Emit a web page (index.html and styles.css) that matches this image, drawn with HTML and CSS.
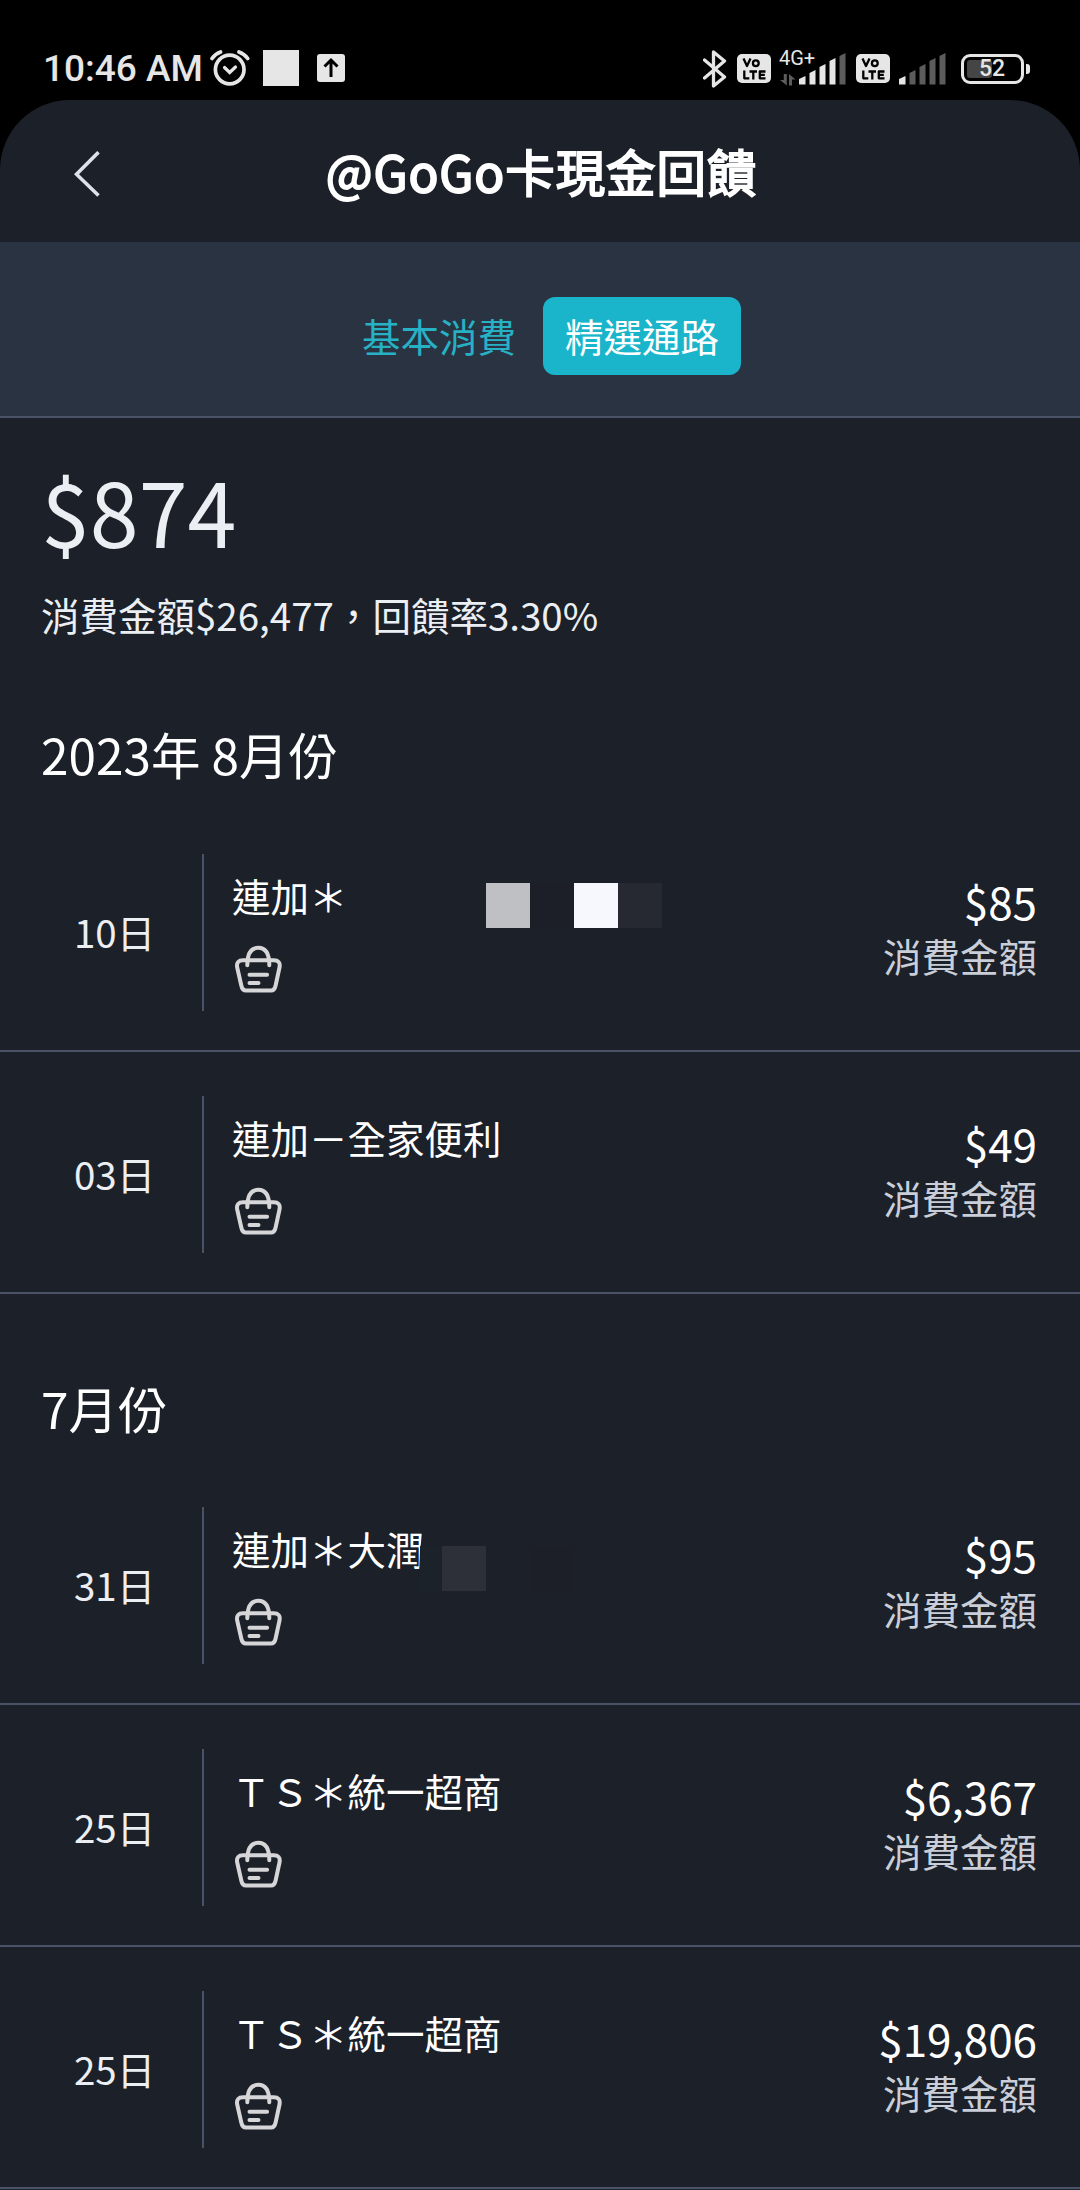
FILE: index.html
```html
<!DOCTYPE html>
<html lang="zh-Hant">
<head>
<meta charset="utf-8">
<title>@GoGo卡現金回饋</title>
<link rel="stylesheet" href="styles.css">
</head>
<body>
<svg class="defs" width="0" height="0">
  <symbol id="basket" viewBox="0 0 50 50">
    <g fill="none" stroke="#d6d6d8" stroke-width="4" stroke-linecap="round" stroke-linejoin="round">
      <path d="M14.300 21.200C14.300 10 17.800 3.800 25.300 3.800S36.300 10 36.300 21.200"/>
      <path d="M10 16.300H40.800Q47.600 16.300 46.600 23L42.600 41.500Q41.600 46.500 38 46.500H13Q9.300 46.500 8.300 41.500L4.100 23Q3.200 16.300 10 16.300Z"/>
      <path d="M16.500 30.700H34.100M16.500 39H25.500"/>
    </g>
  </symbol>
  <symbol id="volte" viewBox="0 0 34 29">
    <rect width="34" height="29" rx="5" fill="#e6e6e6"/>
    <g fill="none" stroke="#000" stroke-width="2.300" stroke-linejoin="round">
      <path d="M6.500 4.500L10 12L13.500 4.500M7.300 16.500V24.300H12.300M12.500 17.500H20M16.300 17.500V25.500M28.500 17.500H22.800V24.300H28.500M22.800 20.900H27.800"/>
      <circle cx="18.800" cy="9.300" r="2.900"/>
    </g>
  </symbol>
  <symbol id="bars" viewBox="0 0 48 32">
    <path d="M0 31.500V26L6.500 23V31.500Z" class="first-bar"/>
    <path d="M10.500 31.500V20L16.500 17V31.500ZM20.500 31.500V14L26.500 11V31.500ZM30.500 31.500V8L36.500 5V31.500Z"/>
    <path d="M40.500 31.500V3L46.500 0V31.500Z" class="last-bar"/>
  </symbol>
</svg>

<div class="statusbar">
  <div class="status-left">
    <span class="clock">10:46 AM</span>
    <svg class="alarm" viewBox="0 0 40 38" fill="none" stroke="#e6e6e6">
      <circle cx="19.700" cy="20.500" r="14.300" stroke-width="3.700"/>
      <path d="M14.500 18.500L19.700 23.500L25.500 18" stroke-width="3.200" stroke-linecap="round"/>
      <path d="M2 9.500Q5 5 10.500 3M29 3Q34.500 5 37.700 9.500" stroke-width="3.700" stroke-linecap="round"/>
    </svg>
    <span class="notice"></span>
    <svg class="upload" viewBox="0 0 28 28">
      <rect width="28" height="28" rx="3" fill="#e6e6e6"/>
      <path d="M14 23V6M7.500 12.500L14 6L20.500 12.500" fill="none" stroke="#000" stroke-width="3"/>
    </svg>
  </div>
  <div class="status-right">
    <svg class="bluetooth" viewBox="0 0 24 38" fill="none" stroke="#e6e6e6" stroke-width="3.300" stroke-linejoin="round" stroke-linecap="round">
      <path d="M1.500 10L21.500 27L10.500 36V2L21.500 11L1.500 28"/>
    </svg>
    <svg class="volte"><use href="#volte"/></svg>
    <div class="network">
      <span class="net-type">4G+</span>
      <svg class="transfer" viewBox="0 0 16 12" fill="#5c5c5c"><path d="M3.800 0H6.800V11.500L0 6H3.800ZM9 0L15.500 5.500H12V11.500H9Z"/></svg>
      <svg class="bars strong"><use href="#bars"/></svg>
    </div>
    <svg class="volte"><use href="#volte"/></svg>
    <svg class="bars weak"><use href="#bars"/></svg>
    <div class="battery"><span class="level"></span><span class="percent">52</span></div>
  </div>
</div>

<div class="app">
  <header class="header">
    <svg class="back" viewBox="0 0 26 46" fill="none" stroke="#dde1e8" stroke-width="3.600"><path d="M24.500 1.200L2.500 23.200L24.500 44.500"/></svg>
    <h1 class="title">@GoGo卡現金回饋</h1>
  </header>
  <nav class="tabs">
    <span class="tab">基本消費</span>
    <span class="tab active">精選通路</span>
  </nav>
  <section class="summary">
    <div class="total">$874</div>
    <div class="detail">消費金額$26,477，回饋率3.30%</div>
  </section>

  <section class="month">
    <h2 class="month-title">2023年 8月份</h2>
    <div class="row">
      <span class="date">10日</span>
      <div class="info">
        <span class="name">連加＊</span>
        <svg class="basket"><use href="#basket"/></svg>
        <div class="mosaic mosaic-a"><i class="gray"></i><i class="night"></i><i class="white"></i><i class="dim"></i></div>
      </div>
      <div class="cost"><span class="amount">$85</span><span class="label">消費金額</span></div>
    </div>
    <div class="row">
      <span class="date">03日</span>
      <div class="info">
        <span class="name">連加－全家便利</span>
        <svg class="basket"><use href="#basket"/></svg>
      </div>
      <div class="cost"><span class="amount">$49</span><span class="label">消費金額</span></div>
    </div>
  </section>

  <section class="month">
    <h2 class="month-title">7月份</h2>
    <div class="row">
      <span class="date">31日</span>
      <div class="info">
        <span class="name cut">連加＊大潤</span>
        <svg class="basket"><use href="#basket"/></svg>
        <div class="mosaic mosaic-b"><i class="edge"></i><i class="slate"></i><i></i><i class="night"></i></div>
      </div>
      <div class="cost"><span class="amount">$95</span><span class="label">消費金額</span></div>
    </div>
    <div class="row">
      <span class="date">25日</span>
      <div class="info">
        <span class="name">ＴＳ＊統一超商</span>
        <svg class="basket"><use href="#basket"/></svg>
      </div>
      <div class="cost"><span class="amount">$6,367</span><span class="label">消費金額</span></div>
    </div>
    <div class="row">
      <span class="date">25日</span>
      <div class="info">
        <span class="name">ＴＳ＊統一超商</span>
        <svg class="basket"><use href="#basket"/></svg>
      </div>
      <div class="cost"><span class="amount">$19,806</span><span class="label">消費金額</span></div>
    </div>
  </section>
</div>
</body>
</html>
```
FILE: styles.css
```css
* { box-sizing: border-box; }
html { background: #000; }
body {
  margin: 0;
  width: 1080px;
  height: 2190px;
  overflow: hidden;
  background: #000;
  color: #fff;
  font-family: "Noto Sans CJK TC", sans-serif;
  font-size: 38.5px;
}
svg { display: block; flex: none; }
.defs { position: absolute; }

.statusbar {
  height: 100px;
  padding: 49px 50px 0 43px;
  display: flex;
  justify-content: space-between;
  align-items: flex-start;
  color: #e6e6e6;
  font-family: Roboto, sans-serif;
}
.status-left, .status-right { display: flex; align-items: center; height: 39px; }
.clock { width: 167px; font-size: 37px; font-weight: 500; line-height: 39px; white-space: nowrap; }
.alarm { width: 40px; height: 38px; margin-top: -1px; }
.notice { width: 36px; height: 36px; margin-left: 13px; margin-top: -1px; background: #e6e6e6; }
.upload { width: 28px; height: 28px; margin-left: 18px; margin-top: -1px; }
.bluetooth { width: 24px; height: 38px; margin-right: 10px; }
.volte { width: 34px; height: 29px; }
.network {
  display: grid;
  grid-template-columns: 20px 48px;
  grid-template-rows: 21px 11px;
  width: 68px;
  margin: 0 9px 0 8px;
}
.net-type { grid-area: 1 / 1; font-size: 20px; line-height: 16px; margin-top: -3px; white-space: nowrap; }
.transfer { grid-area: 2 / 1; width: 16px; height: 12px; margin-left: 1px; }
.network .bars { grid-area: 1 / 2 / 3 / 3; }
.bars { width: 48px; height: 32px; }
.strong { fill: #e6e6e6; --first: #e6e6e6; --last: #5c5c5c; }
.weak { margin-left: 9px; fill: #5c5c5c; --first: #e6e6e6; --last: #5c5c5c; }
.first-bar { fill: var(--first); }
.last-bar { fill: var(--last); }
.battery {
  position: relative;
  width: 63px;
  height: 30px;
  margin-left: 14px;
  margin-right: 6px;
  padding-left: 3px;
  border: 3px solid #e6e6e6;
  border-radius: 9px;
  display: flex;
  align-items: center;
}
.battery::after {
  content: "";
  position: absolute;
  right: -9px;
  top: 7px;
  width: 4px;
  height: 10px;
  border-radius: 0 3px 3px 0;
  background: #e6e6e6;
}
.level { width: 25px; height: 18px; border-radius: 3px; background: #454545; }
.percent { margin-left: -13px; font-size: 23px; font-weight: 500; line-height: 24px; }

.app {
  height: 2090px;
  background: #1c2028;
  border-radius: 70px 70px 0 0;
  overflow: hidden;
}
.header {
  height: 142px;
  padding: 0 74px;
  display: grid;
  grid-template-columns: 26px 1fr 26px;
  align-items: center;
}
.back { width: 26px; height: 46px; margin-top: 5px; }
.title {
  margin: 0;
  padding-left: 3px;
  font-size: 49.5px;
  font-weight: 400;
  letter-spacing: 0.9px;
  -webkit-text-stroke: 1.9px #fff;
  line-height: 72px;
  text-align: center;
  white-space: nowrap;
}
.tabs {
  height: 176px;
  padding: 55px 0 0 1px;
  display: flex;
  justify-content: center;
  align-items: flex-start;
  gap: 5px;
  background: #2a3342;
  border-bottom: 2px solid #4a5468;
}
.tab { padding: 0 22px; height: 78px; line-height: 76px; color: #27b1c4; }
.active { background: #1ab5ca; color: #fff; border-radius: 12px; }

.summary { padding: 28px 41px 0; color: #ebeff3; height: 256px; }
.total { font-size: 88px; line-height: 128px; }
.detail { line-height: 56px; margin-top: 12px; }

.month-title {
  margin: 0;
  padding-left: 41px;
  height: 136px;
  font-size: 49.5px;
  font-weight: 400;
  line-height: 160px;
}
.month + .month { padding-top: 33px; }
.month + .month .month-title { line-height: 162px; }
.row {
  height: 242px;
  padding: 44px 43px 39px 0;
  display: grid;
  grid-template-columns: 202px 1fr auto;
  border-bottom: 2px solid #4a5268;
}
.date { padding-left: 74px; line-height: 154px; color: #ebeff3; }
.info {
  position: relative;
  border-left: 2px solid #4a5268;
  padding: 13px 0 0 28px;
}
.name { display: block; line-height: 56px; white-space: nowrap; }
.basket { width: 50px; height: 50px; margin: 21px 0 0 1px; }
.cost { display: flex; flex-direction: column; align-items: flex-end; padding-top: 21px; }
.amount { font-size: 44px; line-height: 53px; }
.label { line-height: 54px; color: #c9ced8; }

.cut { width: 192px; clip-path: polygon(0 0, 192px 0, 188px 30px, 187px 56px, 0 56px); }
.mosaic { position: absolute; display: flex; height: 45px; }
.mosaic i { width: 44px; }
.mosaic-a { left: 282px; top: 29px; }
.mosaic-b { left: 216px; top: 39px; }
.mosaic .edge { width: 22px; background: #1c222a; }
.gray { background: #bfc0c4; }
.white { background: #f6f8fd; }
.dim { background: #262932; }
.night { background: #1c1f27; }
.slate { background: #2d3038; }
```
